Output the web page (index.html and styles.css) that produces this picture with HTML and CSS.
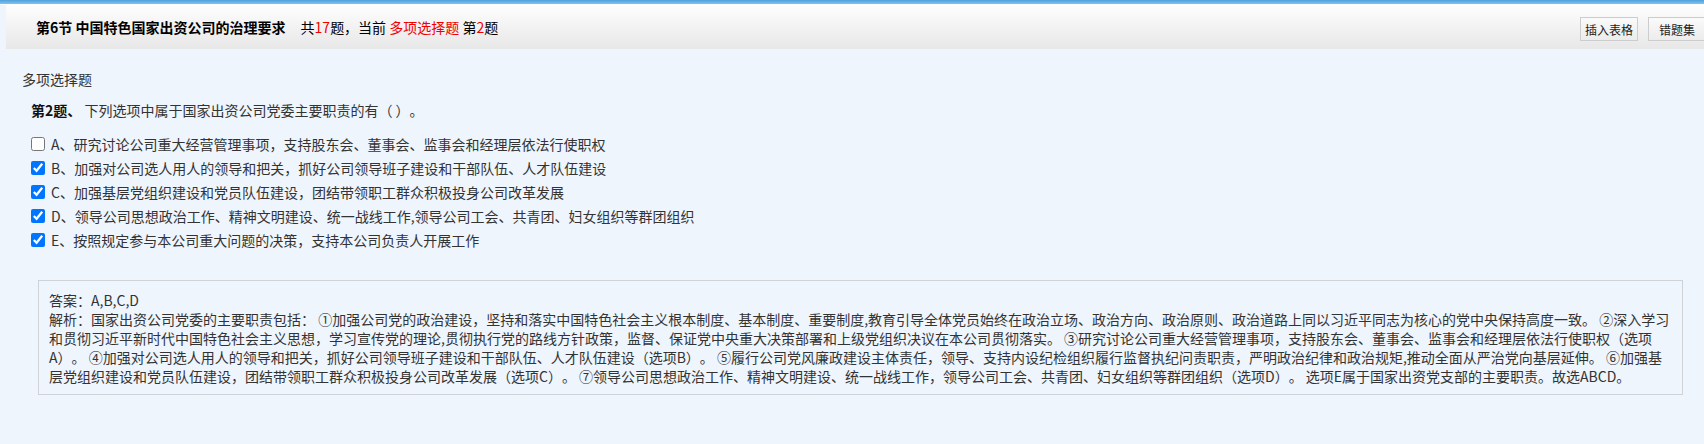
FILE: index.html
```html
<!DOCTYPE html>
<html>
<head>
    <meta charset="utf-8">
    <title>多项选择题</title>
    <link rel="stylesheet" href="styles.css">
</head>
<body>

<div class="topline"></div>

<div class="header">
    <div class="header-title">
        <span class="section">第6节 中国特色国家出资公司的治理要求</span>
        <span class="progress">共<span class="red">17</span>题，当前 <span class="red">多项选择题</span> 第<span class="red">2</span>题</span>
    </div>
    <div class="header-tools">
        <button class="tool-btn">插入表格</button>
        <button class="tool-btn wide">错题集</button>
    </div>
</div>

<div class="type-name">多项选择题</div>

<div class="stem"><b>第2题、</b> 下列选项中属于国家出资公司党委主要职责的有（ ）。</div>

<ul class="options">
    <li><label><input type="checkbox"> A、研究讨论公司重大经营管理事项，支持股东会、董事会、监事会和经理层依法行使职权</label></li>
    <li><label><input type="checkbox" checked> B、加强对公司选人用人的领导和把关，抓好公司领导班子建设和干部队伍、人才队伍建设</label></li>
    <li><label><input type="checkbox" checked> C、加强基层党组织建设和党员队伍建设，团结带领职工群众积极投身公司改革发展</label></li>
    <li><label><input type="checkbox" checked> D、领导公司思想政治工作、精神文明建设、统一战线工作,领导公司工会、共青团、妇女组织等群团组织</label></li>
    <li><label><input type="checkbox" checked> E、按照规定参与本公司重大问题的决策，支持本公司负责人开展工作</label></li>
</ul>

<div class="answer-box">
    <div>答案：A,B,C,D</div>
    <div>解析：国家出资公司党委的主要职责包括： ①加强公司党的政治建设，坚持和落实中国特色社会主义根本制度、基本制度、重要制度,教育引导全体党员始终在政治立场、政治方向、政治原则、政治道路上同以习近平同志为核心的党中央保持高度一致。 ②深入学习和贯彻习近平新时代中国特色社会主义思想，学习宣传党的理论,贯彻执行党的路线方针政策，监督、保证党中央重大决策部署和上级党组织决议在本公司贯彻落实。 ③研究讨论公司重大经营管理事项，支持股东会、董事会、监事会和经理层依法行使职权（选项A）。 ④加强对公司选人用人的领导和把关，抓好公司领导班子建设和干部队伍、人才队伍建设（选项B）。 ⑤履行公司党风廉政建设主体责任，领导、支持内设纪检组织履行监督执纪问责职责，严明政治纪律和政治规矩,推动全面从严治党向基层延伸。 ⑥加强基层党组织建设和党员队伍建设，团结带领职工群众积极投身公司改革发展（选项C）。 ⑦领导公司思想政治工作、精神文明建设、统一战线工作，领导公司工会、共青团、妇女组织等群团组织（选项D）。 选项E属于国家出资党支部的主要职责。故选ABCD。</div>
</div>

</body>
</html>
```

FILE: styles.css
```css
body {
    margin: 0;
    background: #eef5fd;
    font-family: "Noto Sans CJK SC", "Noto Sans", sans-serif;
    font-size: 14px;
    color: #333;
    text-spacing-trim: space-all;
}

.topline {
    height: 4px;
    background: linear-gradient(#4ea2dc, #86c3ec);
    border-bottom: 1px solid #fff;
}

.header {
    margin-left: 6px;
    height: 44px;
    display: flex;
    align-items: center;
    justify-content: space-between;
    padding-left: 30px;
    background: linear-gradient(#fefefe, #e7e7e7);
    font-size: 14px;
    color: #000;
}

.header-title .section {
    font-weight: bold;
    margin-right: 12px;
}

.red {
    color: #f20000;
}

.header-tools {
    display: flex;
    gap: 10px;
    margin-top: 4px;
    margin-right: -2px;
}

.tool-btn {
    height: 24px;
    padding: 0 4px;
    font-family: inherit;
    font-size: 12px;
    color: #222;
    background: linear-gradient(#fafafa, #ececec);
    border: 1px solid #cdcdcd;
    border-radius: 0;
}

.tool-btn.wide {
    padding: 0 10px;
}

.type-name {
    margin: 20px 0 0 22px;
    line-height: 20px;
}

.stem {
    margin: 11px 0 0 31px;
    line-height: 20px;
}

.stem b {
    color: #111;
}

.options {
    list-style: none;
    margin: 12px 0 0 0;
    padding: 0 0 0 31px;
}

.options li {
    height: 24px;
    line-height: 24px;
}

.options label {
    display: flex;
    align-items: center;
}

.options input {
    width: 14px;
    height: 14px;
    margin: 0 6px 0 0;
}

.answer-box {
    margin: 28px 21px 0 38px;
    padding: 10px 12px 8px 10px;
    border: 1px solid #cfd3d8;
    line-height: 19px;
}
```
